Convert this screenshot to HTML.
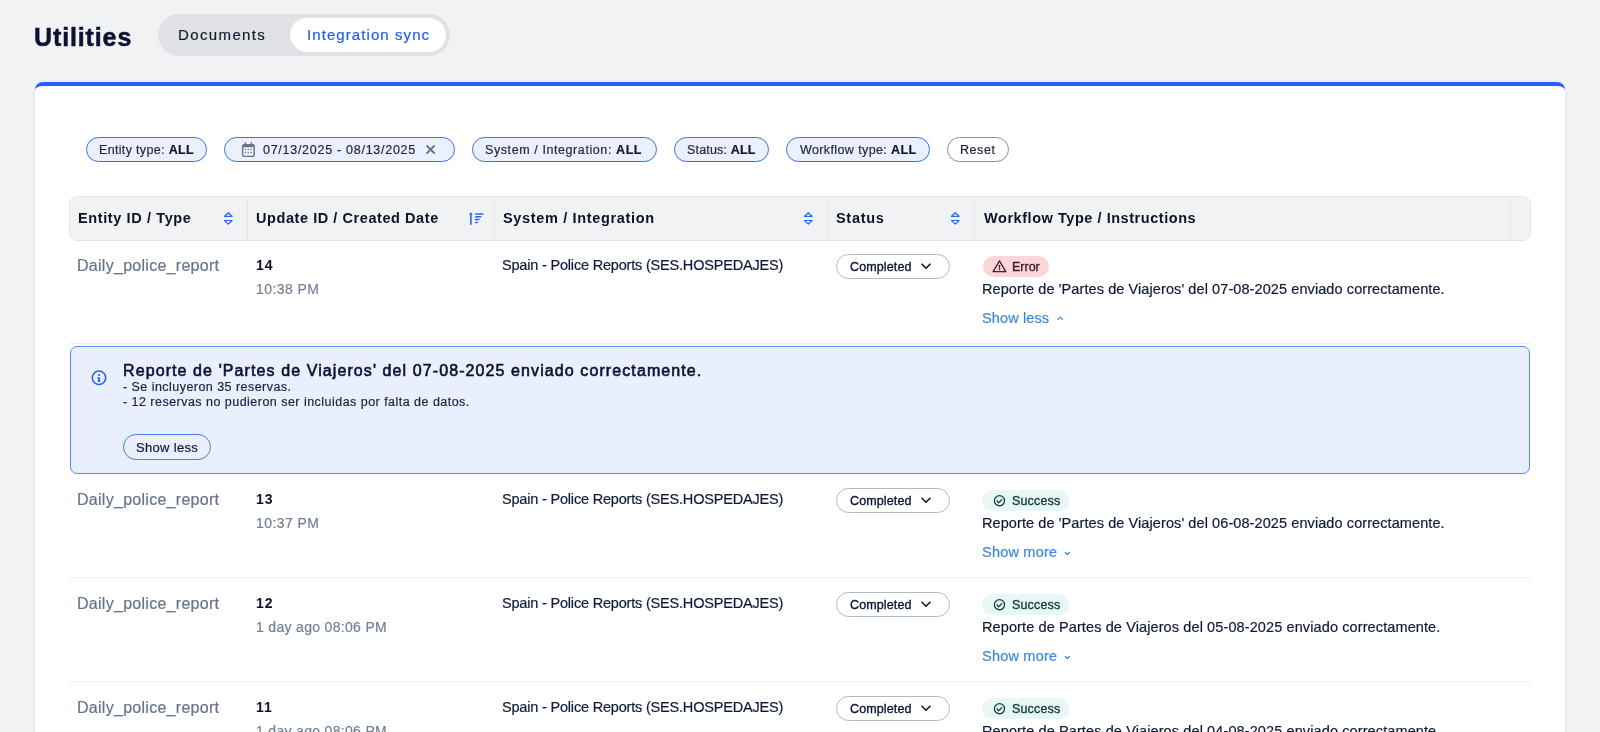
<!DOCTYPE html>
<html><head><meta charset="utf-8"><title>Utilities - Integration sync</title>
<style>
html,body{margin:0;padding:0}
body{width:1600px;height:732px;overflow:hidden;position:relative;background:#f1f2f4;font-family:"Liberation Sans", sans-serif}
.t{position:absolute;white-space:nowrap;line-height:1;will-change:transform}
.b{position:absolute}
</style></head><body>
<div class="t" style="left:34.00px;top:25.00px;font-size:25px;color:#0b1233;font-weight:700;letter-spacing:0.875px;-webkit-text-stroke:0.5px #0b1233">Utilities</div>
<div class="b" style="left:158.00px;top:14.00px;width:292.00px;height:42.00px;background:#e0e2e6;border-radius:21px"></div>
<div class="b" style="left:290.00px;top:18.00px;width:156.00px;height:34.00px;background:#fff;border-radius:17px"></div>
<div class="t" style="left:178.00px;top:27.00px;font-size:15px;color:#161c30;font-weight:400;letter-spacing:1.375px;-webkit-text-stroke:0.2px #161c30">Documents</div>
<div class="t" style="left:306.60px;top:27.00px;font-size:15px;color:#1e5ef5;font-weight:400;letter-spacing:1.080px;-webkit-text-stroke:0.2px #1e5ef5">Integration sync</div>
<div class="b" style="left:35px;top:82px;width:1530px;height:720px;background:#fff;border-top:4px solid #2560ff;border-radius:8px;box-shadow:0 0 3px rgba(20,30,60,0.10);box-sizing:border-box"></div>
<div class="b" style="left:86.00px;top:137.00px;width:121.00px;height:25.00px;background:#eaf0fd;border:1px solid #3a70f4;border-radius:13px;box-sizing:border-box"></div>
<div class="t" style="left:99.00px;top:144.00px;font-size:12.5px;color:#1f2540;font-weight:400;letter-spacing:0.333px;-webkit-text-stroke:0.2px #1f2540">Entity type: <b style="font-weight:700;color:#0d1430">ALL</b></div>
<div class="b" style="left:224.00px;top:137.00px;width:230.50px;height:25.00px;background:#eaf0fd;border:1px solid #3a70f4;border-radius:13px;box-sizing:border-box"></div>
<svg class="b" style="left:240.00px;top:141.00px" width="16" height="17" viewBox="0 0 16 17" fill="none"><rect x="2.6" y="3.6" width="11.6" height="11.8" rx="2" stroke="#6b7385" stroke-width="1.4"/><rect x="2.6" y="3.6" width="11.6" height="2.6" fill="#6b7385"/><path d="M5.4 1.2v3M11.4 1.2v3" stroke="#6b7385" stroke-width="1.4"/><g fill="#6b7385"><circle cx="5.4" cy="8.5" r=".75"/><circle cx="8.2" cy="8.5" r=".75"/><circle cx="11" cy="8.5" r=".75"/><circle cx="5.4" cy="11.5" r=".75"/><circle cx="8.2" cy="11.5" r=".75"/><circle cx="11" cy="11.5" r=".75"/></g></svg>
<div class="t" style="left:263.00px;top:144.00px;font-size:12.5px;color:#1f2540;font-weight:400;letter-spacing:0.727px;-webkit-text-stroke:0.2px #1f2540">07/13/2025 - 08/13/2025</div>
<svg class="b" style="left:424.00px;top:143.00px" width="13" height="13" viewBox="0 0 13 13" fill="none"><path d="M3.1 3l7 7M10.1 3l-7 7" stroke="#6b7385" stroke-width="1.85" stroke-linecap="round"/></svg>
<div class="b" style="left:472.00px;top:137.00px;width:185.00px;height:25.00px;background:#eaf0fd;border:1px solid #3a70f4;border-radius:13px;box-sizing:border-box"></div>
<div class="t" style="left:485.30px;top:144.00px;font-size:12.5px;color:#1f2540;font-weight:400;letter-spacing:0.587px;-webkit-text-stroke:0.2px #1f2540">System / Integration: <b style="font-weight:700;color:#0d1430">ALL</b></div>
<div class="b" style="left:673.50px;top:137.00px;width:95.50px;height:25.00px;background:#eaf0fd;border:1px solid #3a70f4;border-radius:13px;box-sizing:border-box"></div>
<div class="t" style="left:686.50px;top:144.00px;font-size:12.5px;color:#1f2540;font-weight:400;letter-spacing:0.180px;-webkit-text-stroke:0.2px #1f2540">Status: <b style="font-weight:700;color:#0d1430">ALL</b></div>
<div class="b" style="left:785.50px;top:137.00px;width:144.50px;height:25.00px;background:#eaf0fd;border:1px solid #3a70f4;border-radius:13px;box-sizing:border-box"></div>
<div class="t" style="left:799.50px;top:144.00px;font-size:12.5px;color:#1f2540;font-weight:400;letter-spacing:0.388px;-webkit-text-stroke:0.2px #1f2540">Workflow type: <b style="font-weight:700;color:#0d1430">ALL</b></div>
<div class="b" style="left:947.00px;top:137.00px;width:62.00px;height:25.00px;background:#fff;border:1px solid #8a92a0;border-radius:13px;box-sizing:border-box"></div>
<div class="t" style="left:960.20px;top:144.00px;font-size:12.5px;color:#1b2135;font-weight:400;letter-spacing:0.550px;-webkit-text-stroke:0.2px #1b2135">Reset</div>
<div class="b" style="left:69.00px;top:196.00px;width:1462.00px;height:44.50px;background:#f1f2f4;border:1px solid #e5e7ea;border-radius:8px;box-sizing:border-box"></div>
<div class="b" style="left:247.00px;top:197.00px;width:1.00px;height:42.50px;background:#e3e5e8"></div>
<div class="b" style="left:494.00px;top:197.00px;width:1.00px;height:42.50px;background:#e3e5e8"></div>
<div class="b" style="left:827.00px;top:197.00px;width:1.00px;height:42.50px;background:#e3e5e8"></div>
<div class="b" style="left:973.50px;top:197.00px;width:1.00px;height:42.50px;background:#e3e5e8"></div>
<div class="b" style="left:1510.00px;top:197.00px;width:1.00px;height:42.50px;background:#e3e5e8"></div>
<div class="t" style="left:77.70px;top:211.00px;font-size:14.5px;color:#0d1226;font-weight:700;letter-spacing:0.613px;">Entity ID / Type</div>
<div class="t" style="left:256.00px;top:211.00px;font-size:14.5px;color:#0d1226;font-weight:700;letter-spacing:0.565px;">Update ID / Created Date</div>
<div class="t" style="left:503.40px;top:211.00px;font-size:14.5px;color:#0d1226;font-weight:700;letter-spacing:0.658px;">System / Integration</div>
<div class="t" style="left:835.50px;top:211.00px;font-size:14.5px;color:#0d1226;font-weight:700;letter-spacing:0.700px;">Status</div>
<div class="t" style="left:983.80px;top:211.00px;font-size:14.5px;color:#0d1226;font-weight:700;letter-spacing:0.548px;">Workflow Type / Instructions</div>
<svg class="b" style="left:222.70px;top:211.00px" width="11" height="15" viewBox="0 0 11 15" fill="none"><path d="M5.3 1.7L1.5 5.3h7.6z M5.3 13.1L1.5 9.5h7.6z" stroke="#2f63f5" stroke-width="1.2" stroke-linejoin="round"/></svg>
<svg class="b" style="left:802.70px;top:211.00px" width="11" height="15" viewBox="0 0 11 15" fill="none"><path d="M5.3 1.7L1.5 5.3h7.6z M5.3 13.1L1.5 9.5h7.6z" stroke="#2f63f5" stroke-width="1.2" stroke-linejoin="round"/></svg>
<svg class="b" style="left:949.70px;top:211.00px" width="11" height="15" viewBox="0 0 11 15" fill="none"><path d="M5.3 1.7L1.5 5.3h7.6z M5.3 13.1L1.5 9.5h7.6z" stroke="#2f63f5" stroke-width="1.2" stroke-linejoin="round"/></svg>
<svg class="b" style="left:468.00px;top:211.00px" width="17" height="15" viewBox="0 0 17 15" fill="none"><path d="M2.9 2.4v11.4" stroke="#2f63f5" stroke-width="1.6"/><path d="M2.9 1.2L0.9 3.4h4z" fill="#2f63f5"/><path d="M7.6 2.9h7.2M7.6 5.8h5.2M7.6 8.6h3.3M7.6 11.6h1.6" stroke="#2f63f5" stroke-width="1.5" stroke-linecap="round"/></svg>
<div class="t" style="left:77.00px;top:258.00px;font-size:16px;color:#65748b;font-weight:400;letter-spacing:0.278px;-webkit-text-stroke:0.2px #65748b">Daily_police_report</div>
<div class="t" style="left:255.50px;top:258.00px;font-size:14px;color:#0d1226;font-weight:700;letter-spacing:1.000px;">14</div>
<div class="t" style="left:255.50px;top:282.00px;font-size:14px;color:#728096;font-weight:400;letter-spacing:0.429px;-webkit-text-stroke:0.2px #728096">10:38 PM</div>
<div class="t" style="left:502.10px;top:258.00px;font-size:14.5px;color:#0f1a3d;font-weight:400;letter-spacing:-0.189px;-webkit-text-stroke:0.2px #0f1a3d">Spain - Police Reports (SES.HOSPEDAJES)</div>
<div class="b" style="left:835.70px;top:254.10px;width:114.30px;height:24.80px;background:#fff;border:1px solid #b4bac6;border-radius:13px;box-sizing:border-box"></div>
<div class="t" style="left:849.50px;top:261.00px;font-size:12.5px;color:#0c1433;font-weight:400;letter-spacing:0.125px;-webkit-text-stroke:0.35px #0c1433">Completed</div>
<svg class="b" style="left:919.00px;top:261.00px" width="14" height="10" viewBox="0 0 14 10" fill="none"><path d="M3 3.2l4 4 4-4" stroke="#0c1433" stroke-width="1.6" stroke-linecap="round" stroke-linejoin="round"/></svg>
<div class="b" style="left:982.50px;top:256.30px;width:66.00px;height:20.70px;background:#fcd5da;border-radius:11px"></div>
<svg class="b" style="left:991.00px;top:259.00px" width="17" height="15" viewBox="0 0 17 15" fill="none"><path d="M8.5 1.9L14.8 12.6H2.1z" stroke="#45202b" stroke-width="1.3" stroke-linejoin="round"/><path d="M8.5 6.3v2.7" stroke="#45202b" stroke-width="1.3" stroke-linecap="round"/><circle cx="8.5" cy="10.5" r=".75" fill="#45202b"/></svg>
<div class="t" style="left:1011.90px;top:261.00px;font-size:12.5px;color:#3a1b22;font-weight:400;letter-spacing:0.000px;-webkit-text-stroke:0.35px #3a1b22">Error</div>
<div class="t" style="left:982.20px;top:282.00px;font-size:14.5px;color:#101a3a;font-weight:400;letter-spacing:0.088px;-webkit-text-stroke:0.2px #101a3a">Reporte de 'Partes de Viajeros' del 07-08-2025 enviado correctamente.</div>
<div class="t" style="left:982.20px;top:311.00px;font-size:14.5px;color:#3b87d9;font-weight:400;letter-spacing:0.125px;-webkit-text-stroke:0.2px #3b87d9">Show less</div>
<svg class="b" style="left:1055.00px;top:313.00px" width="10" height="10" viewBox="0 0 10 10" fill="none"><path d="M3 6.5l2.3-2.3 2.3 2.3" stroke="#3b87d9" stroke-width="1.1" stroke-linecap="round" stroke-linejoin="round"/></svg>
<div class="b" style="left:69.00px;top:343.00px;width:1462.00px;height:1.00px;background:#edf0f2"></div>
<div class="t" style="left:77.00px;top:492.00px;font-size:16px;color:#65748b;font-weight:400;letter-spacing:0.278px;-webkit-text-stroke:0.2px #65748b">Daily_police_report</div>
<div class="t" style="left:255.50px;top:492.00px;font-size:14px;color:#0d1226;font-weight:700;letter-spacing:1.000px;">13</div>
<div class="t" style="left:255.50px;top:516.00px;font-size:14px;color:#728096;font-weight:400;letter-spacing:0.429px;-webkit-text-stroke:0.2px #728096">10:37 PM</div>
<div class="t" style="left:502.10px;top:492.00px;font-size:14.5px;color:#0f1a3d;font-weight:400;letter-spacing:-0.189px;-webkit-text-stroke:0.2px #0f1a3d">Spain - Police Reports (SES.HOSPEDAJES)</div>
<div class="b" style="left:835.70px;top:488.10px;width:114.30px;height:24.80px;background:#fff;border:1px solid #b4bac6;border-radius:13px;box-sizing:border-box"></div>
<div class="t" style="left:849.50px;top:495.00px;font-size:12.5px;color:#0c1433;font-weight:400;letter-spacing:0.125px;-webkit-text-stroke:0.35px #0c1433">Completed</div>
<svg class="b" style="left:919.00px;top:495.00px" width="14" height="10" viewBox="0 0 14 10" fill="none"><path d="M3 3.2l4 4 4-4" stroke="#0c1433" stroke-width="1.6" stroke-linecap="round" stroke-linejoin="round"/></svg>
<div class="b" style="left:982.40px;top:490.00px;width:86.40px;height:20.80px;background:#e7f7f5;border-radius:11px"></div>
<svg class="b" style="left:992.00px;top:492.50px" width="16" height="16" viewBox="0 0 16 16" fill="none"><circle cx="7.5" cy="7.7" r="5.1" stroke="#0f3b38" stroke-width="1.25"/><path d="M4.9 7.9l1.8 1.8 3.2-3.1" stroke="#0f3b38" stroke-width="1.3" stroke-linecap="round" stroke-linejoin="round"/></svg>
<div class="t" style="left:1011.70px;top:495.00px;font-size:12.5px;color:#123c38;font-weight:400;letter-spacing:0.167px;-webkit-text-stroke:0.35px #123c38">Success</div>
<div class="t" style="left:982.20px;top:516.00px;font-size:14.5px;color:#101a3a;font-weight:400;letter-spacing:0.088px;-webkit-text-stroke:0.2px #101a3a">Reporte de 'Partes de Viajeros' del 06-08-2025 enviado correctamente.</div>
<div class="t" style="left:982.20px;top:545.00px;font-size:14.5px;color:#3b87d9;font-weight:400;letter-spacing:0.213px;-webkit-text-stroke:0.2px #3b87d9">Show more</div>
<svg class="b" style="left:1062.00px;top:548.00px" width="10" height="10" viewBox="0 0 10 10" fill="none"><path d="M3.3 4.5l2 2 2-2" stroke="#3b87d9" stroke-width="1.2" stroke-linecap="round" stroke-linejoin="round"/></svg>
<div class="b" style="left:69.00px;top:577.00px;width:1462.00px;height:1.00px;background:#edf0f2"></div>
<div class="t" style="left:77.00px;top:596.00px;font-size:16px;color:#65748b;font-weight:400;letter-spacing:0.278px;-webkit-text-stroke:0.2px #65748b">Daily_police_report</div>
<div class="t" style="left:255.50px;top:596.00px;font-size:14px;color:#0d1226;font-weight:700;letter-spacing:1.000px;">12</div>
<div class="t" style="left:255.50px;top:620.00px;font-size:14px;color:#728096;font-weight:400;letter-spacing:0.318px;-webkit-text-stroke:0.2px #728096">1 day ago 08:06 PM</div>
<div class="t" style="left:502.10px;top:596.00px;font-size:14.5px;color:#0f1a3d;font-weight:400;letter-spacing:-0.189px;-webkit-text-stroke:0.2px #0f1a3d">Spain - Police Reports (SES.HOSPEDAJES)</div>
<div class="b" style="left:835.70px;top:592.10px;width:114.30px;height:24.80px;background:#fff;border:1px solid #b4bac6;border-radius:13px;box-sizing:border-box"></div>
<div class="t" style="left:849.50px;top:599.00px;font-size:12.5px;color:#0c1433;font-weight:400;letter-spacing:0.125px;-webkit-text-stroke:0.35px #0c1433">Completed</div>
<svg class="b" style="left:919.00px;top:599.00px" width="14" height="10" viewBox="0 0 14 10" fill="none"><path d="M3 3.2l4 4 4-4" stroke="#0c1433" stroke-width="1.6" stroke-linecap="round" stroke-linejoin="round"/></svg>
<div class="b" style="left:982.40px;top:594.00px;width:86.40px;height:20.80px;background:#e7f7f5;border-radius:11px"></div>
<svg class="b" style="left:992.00px;top:596.50px" width="16" height="16" viewBox="0 0 16 16" fill="none"><circle cx="7.5" cy="7.7" r="5.1" stroke="#0f3b38" stroke-width="1.25"/><path d="M4.9 7.9l1.8 1.8 3.2-3.1" stroke="#0f3b38" stroke-width="1.3" stroke-linecap="round" stroke-linejoin="round"/></svg>
<div class="t" style="left:1011.70px;top:599.00px;font-size:12.5px;color:#123c38;font-weight:400;letter-spacing:0.167px;-webkit-text-stroke:0.35px #123c38">Success</div>
<div class="t" style="left:982.20px;top:620.00px;font-size:14.5px;color:#101a3a;font-weight:400;letter-spacing:0.109px;-webkit-text-stroke:0.2px #101a3a">Reporte de Partes de Viajeros del 05-08-2025 enviado correctamente.</div>
<div class="t" style="left:982.20px;top:649.00px;font-size:14.5px;color:#3b87d9;font-weight:400;letter-spacing:0.213px;-webkit-text-stroke:0.2px #3b87d9">Show more</div>
<svg class="b" style="left:1062.00px;top:652.00px" width="10" height="10" viewBox="0 0 10 10" fill="none"><path d="M3.3 4.5l2 2 2-2" stroke="#3b87d9" stroke-width="1.2" stroke-linecap="round" stroke-linejoin="round"/></svg>
<div class="b" style="left:69.00px;top:681.00px;width:1462.00px;height:1.00px;background:#edf0f2"></div>
<div class="t" style="left:77.00px;top:700.00px;font-size:16px;color:#65748b;font-weight:400;letter-spacing:0.278px;-webkit-text-stroke:0.2px #65748b">Daily_police_report</div>
<div class="t" style="left:255.50px;top:700.00px;font-size:14px;color:#0d1226;font-weight:700;letter-spacing:1.000px;">11</div>
<div class="t" style="left:255.50px;top:724.00px;font-size:14px;color:#728096;font-weight:400;letter-spacing:0.318px;-webkit-text-stroke:0.2px #728096">1 day ago 08:06 PM</div>
<div class="t" style="left:502.10px;top:700.00px;font-size:14.5px;color:#0f1a3d;font-weight:400;letter-spacing:-0.189px;-webkit-text-stroke:0.2px #0f1a3d">Spain - Police Reports (SES.HOSPEDAJES)</div>
<div class="b" style="left:835.70px;top:696.10px;width:114.30px;height:24.80px;background:#fff;border:1px solid #b4bac6;border-radius:13px;box-sizing:border-box"></div>
<div class="t" style="left:849.50px;top:703.00px;font-size:12.5px;color:#0c1433;font-weight:400;letter-spacing:0.125px;-webkit-text-stroke:0.35px #0c1433">Completed</div>
<svg class="b" style="left:919.00px;top:703.00px" width="14" height="10" viewBox="0 0 14 10" fill="none"><path d="M3 3.2l4 4 4-4" stroke="#0c1433" stroke-width="1.6" stroke-linecap="round" stroke-linejoin="round"/></svg>
<div class="b" style="left:982.40px;top:698.00px;width:86.40px;height:20.80px;background:#e7f7f5;border-radius:11px"></div>
<svg class="b" style="left:992.00px;top:700.50px" width="16" height="16" viewBox="0 0 16 16" fill="none"><circle cx="7.5" cy="7.7" r="5.1" stroke="#0f3b38" stroke-width="1.25"/><path d="M4.9 7.9l1.8 1.8 3.2-3.1" stroke="#0f3b38" stroke-width="1.3" stroke-linecap="round" stroke-linejoin="round"/></svg>
<div class="t" style="left:1011.70px;top:703.00px;font-size:12.5px;color:#123c38;font-weight:400;letter-spacing:0.167px;-webkit-text-stroke:0.35px #123c38">Success</div>
<div class="t" style="left:982.20px;top:724.00px;font-size:14.5px;color:#101a3a;font-weight:400;letter-spacing:0.109px;-webkit-text-stroke:0.2px #101a3a">Reporte de Partes de Viajeros del 04-08-2025 enviado correctamente.</div>
<div class="t" style="left:982.20px;top:753.00px;font-size:14.5px;color:#3b87d9;font-weight:400;letter-spacing:0.213px;-webkit-text-stroke:0.2px #3b87d9">Show more</div>
<svg class="b" style="left:1062.00px;top:756.00px" width="10" height="10" viewBox="0 0 10 10" fill="none"><path d="M3.3 4.5l2 2 2-2" stroke="#3b87d9" stroke-width="1.2" stroke-linecap="round" stroke-linejoin="round"/></svg>
<div class="b" style="left:69.50px;top:345.50px;width:1460.50px;height:128.00px;background:#e9effd;border:1px solid #5a8af3;border-radius:7px;box-sizing:border-box"></div>
<svg class="b" style="left:90.00px;top:369.00px" width="18" height="18" viewBox="0 0 18 18" fill="none"><circle cx="9" cy="8.8" r="6.7" stroke="#2260f5" stroke-width="1.5"/><rect x="8.1" y="8.4" width="1.9" height="4.3" fill="#2260f5"/><rect x="7.2" y="8.4" width="1.2" height="1" fill="#2260f5"/><rect x="7.4" y="11.7" width="3.3" height="1" rx=".4" fill="#2260f5"/><circle cx="9.05" cy="6.1" r="1.05" fill="#2260f5"/></svg>
<div class="t" style="left:122.70px;top:363.00px;font-size:16px;color:#0b1230;font-weight:400;letter-spacing:1.094px;-webkit-text-stroke:0.6px #0b1230">Reporte de 'Partes de Viajeros' del 07-08-2025 enviado correctamente.</div>
<div class="t" style="left:123.40px;top:381.00px;font-size:12.5px;color:#1b2340;font-weight:400;letter-spacing:0.459px;-webkit-text-stroke:0.2px #1b2340">- Se incluyeron 35 reservas.</div>
<div class="t" style="left:123.40px;top:396.00px;font-size:12.5px;color:#1b2340;font-weight:400;letter-spacing:0.472px;-webkit-text-stroke:0.2px #1b2340">- 12 reservas no pudieron ser incluidas por falta de datos.</div>
<div class="b" style="left:122.80px;top:434.00px;width:88.60px;height:26.00px;border:1.5px solid #4a7cf2;border-radius:13px;box-sizing:border-box"></div>
<div class="t" style="left:135.90px;top:441.00px;font-size:13px;color:#14193a;font-weight:400;letter-spacing:0.325px;-webkit-text-stroke:0.2px #14193a">Show less</div>
</body></html>
